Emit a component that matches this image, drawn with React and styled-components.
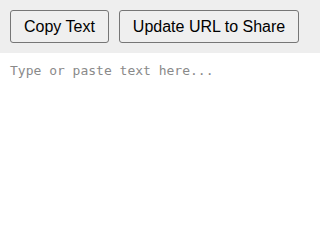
import React, { useState } from "react";
import styled, { createGlobalStyle } from "styled-components";

const GlobalStyle = createGlobalStyle`
  html, body {
    margin: 0;
    padding: 0;
    height: 100%;
    background: #fff;
  }
  #root {
    height: 100%;
  }
`;

const App = () => {
  const [text, setText] = useState("");

  return (
    <>
      <GlobalStyle />
      <Wrapper>
        <Toolbar>
          <Button>Copy Text</Button>
          <Button>Update URL to Share</Button>
        </Toolbar>
        <Editor
          value={text}
          onChange={(e) => setText(e.target.value)}
          placeholder="Type or paste text here..."
        />
      </Wrapper>
    </>
  );
};

const Wrapper = styled.div`
  display: flex;
  flex-direction: column;
  height: 100vh;
`;

const Toolbar = styled.div`
  display: flex;
  gap: 10px;
  padding: 10px;
  background: #eeeeee;
`;

const Button = styled.button`
  font-family: "Liberation Sans", Arial, sans-serif;
  font-size: 16px;
  color: #000;
  background: #efefef;
  border: 1px solid #767676;
  border-radius: 3px;
  height: 33px;
  padding: 0 13px;
`;

const Editor = styled.textarea`
  flex: 1;
  border: none;
  outline: none;
  resize: none;
  padding: 10px;
  font-family: "DejaVu Sans Mono", monospace;
  font-size: 13px;
  color: #000;
  background: #fff;

  &::placeholder {
    color: #8a8a8a;
  }
`;

export default App;
